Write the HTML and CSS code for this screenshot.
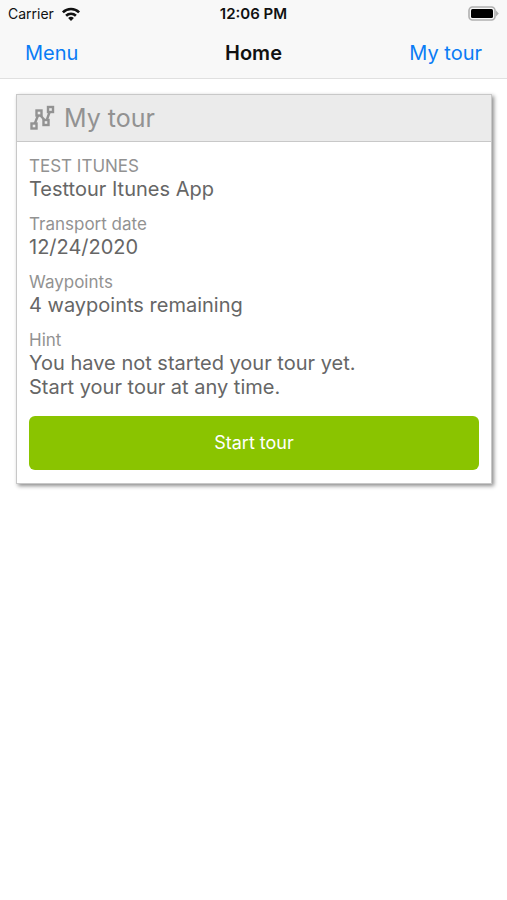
FILE: index.html
```html
<!DOCTYPE html>
<html lang="en">
<head>
  <meta charset="UTF-8" />
  <meta name="viewport" content="width=device-width, initial-scale=1.0" />
  <title>Home</title>
  <link rel="stylesheet" href="styles.css">
</head>
<body>
  <header class="top-bar">
    <div class="status-bar">
      <div class="carrier">
        Carrier
        <svg width="20" height="14" viewBox="0 0 20 14" fill="none" stroke="currentColor" stroke-width="2.6" aria-hidden="true">
          <path d="M1.9 5.4a11.5 11.5 0 0 1 16.2 0"></path>
          <path d="M5.1 8.7a7 7 0 0 1 9.8 0"></path>
          <path d="M10 14L7.1 11.1a4.1 4.1 0 0 1 5.8 0z" fill="currentColor" stroke="none"></path>
        </svg>
      </div>
      <div class="clock">12:06 PM</div>
      <div class="battery">
        <svg width="31" height="15" viewBox="0 0 31 15" aria-hidden="true">
          <rect x="1" y="1" width="26" height="13" rx="3.5" fill="#f7f7f7" stroke="#b0b0b0" stroke-width="1.6"></rect>
          <rect x="3" y="3" width="22" height="9" rx="1.5" fill="#000"></rect>
          <path d="M28 4.5l2.8 3L28 10.5z" fill="#b0b0b0"></path>
        </svg>
      </div>
    </div>
    <nav class="nav-bar">
      <a class="nav-link" href="#menu">Menu</a>
      <h1 class="nav-title">Home</h1>
      <a class="nav-link nav-link-right" href="#tour">My tour</a>
    </nav>
  </header>

  <main class="content">
    <section class="card" id="tour">
      <div class="card-header">
        <svg width="26" height="26" viewBox="0 0 26 26" fill="none" stroke="currentColor" stroke-width="2.4" aria-hidden="true">
          <rect x="2.5" y="18.5" width="5" height="5"></rect>
          <rect x="7.5" y="5.5" width="5" height="5"></rect>
          <rect x="14.5" y="15" width="5" height="5"></rect>
          <rect x="19" y="2" width="5" height="5"></rect>
          <path d="M5.8 18.5L9 10.5M11.5 10.5L15.5 15M17.8 15L20.6 7"></path>
        </svg>
        <h2 class="card-title">My tour</h2>
      </div>
      <div class="card-body">
        <dl class="fields">
          <div class="field">
            <dt>TEST ITUNES</dt>
            <dd>Testtour Itunes App</dd>
          </div>
          <div class="field">
            <dt>Transport date</dt>
            <dd>12/24/2020</dd>
          </div>
          <div class="field">
            <dt>Waypoints</dt>
            <dd>4 waypoints remaining</dd>
          </div>
          <div class="field">
            <dt>Hint</dt>
            <dd>You have not started your tour yet.<br>Start your tour at any time.</dd>
          </div>
        </dl>
        <button class="btn-start" type="button">Start tour</button>
      </div>
    </section>
  </main>
</body>
</html>
```
FILE: styles.css
```css
:root {
  --blue: #0a7cf5;
  --green: #8ac400;
  --bar: #f8f8f8;
  --line: #c8c8c8;
  --text: #666666;
  --text-light: #929292;
}

* {
  margin: 0;
  padding: 0;
  box-sizing: border-box;
}

body {
  font-family: Inter, sans-serif;
  background-color: #fff;
  color: var(--text);
  font-size: 20px;
  line-height: 24px;
}

.top-bar {
  background-color: var(--bar);
  border-bottom: 1px solid #e0e0e0;
  color: #111;
}

.status-bar,
.nav-bar {
  display: grid;
  grid-template-columns: 1fr auto 1fr;
  align-items: center;
}

.status-bar {
  height: 27px;
  padding: 0 8px;
  font-size: 14px;
}

.carrier {
  display: flex;
  align-items: center;
  gap: 7px;
}

.clock {
  font-size: 15px;
  font-weight: 600;
}

.battery {
  display: flex;
  justify-content: flex-end;
}

.nav-bar {
  height: 51px;
  padding: 0 25px;
}

.nav-link {
  color: var(--blue);
  text-decoration: none;
}

.nav-link-right {
  text-align: right;
}

.nav-title {
  font-size: 20px;
  font-weight: 600;
}

.content {
  padding: 15px 15px 15px 16px;
}

.card {
  border: 1px solid var(--line);
  box-shadow: 2px 2px 4px rgba(0, 0, 0, 0.45);
}

.card-header {
  display: flex;
  align-items: center;
  gap: 9px;
  height: 47px;
  padding: 0 12px;
  background-color: #ebebeb;
  border-bottom: 1px solid var(--line);
  color: var(--text-light);
}

.card-title {
  font-size: 25px;
  font-weight: 400;
}

.card-body {
  padding: 13px 12px;
}

.fields {
  display: flex;
  flex-direction: column;
  gap: 12px;
  margin-bottom: 17px;
}

.field dt {
  color: var(--text-light);
  font-size: 17px;
  line-height: 22px;
}

.btn-start {
  display: block;
  width: 100%;
  height: 54px;
  border: none;
  border-radius: 6px;
  background-color: var(--green);
  color: #fff;
  font: inherit;
  font-size: 18px;
  cursor: pointer;
}
```
